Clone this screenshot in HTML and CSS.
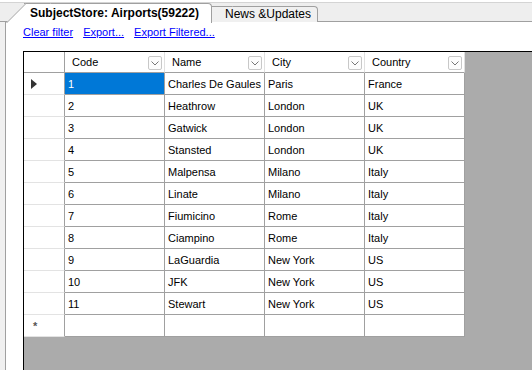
FILE: index.html
```html
<!DOCTYPE html>
<html lang="en">
<head>
    <meta charset="UTF-8">
    <title>SubjectStore: Airports</title>
    <link rel="stylesheet" href="styles.css">
</head>
<body>
    <div class="tabstrip">
        <div class="tab tab-active">SubjectStore: Airports(59222)</div>
        <div class="tab tab-idle">News &amp;Updates</div>
    </div>

    <div class="page">
        <div class="links">
            <a href="#">Clear filter</a>
            <a href="#">Export...</a>
            <a href="#">Export Filtered...</a>
        </div>

        <div class="grid">
            <div class="grid-table" id="gridTable">
                <div class="hcell corner"></div>
                <div class="hcell">Code<span class="drop"><svg width="8" height="5" viewBox="0 0 8 5"><polyline points="0.5,0.5 4,4 7.5,0.5" fill="none" stroke="#777" stroke-width="1"/></svg></span></div>
                <div class="hcell">Name<span class="drop"><svg width="8" height="5" viewBox="0 0 8 5"><polyline points="0.5,0.5 4,4 7.5,0.5" fill="none" stroke="#777" stroke-width="1"/></svg></span></div>
                <div class="hcell">City<span class="drop"><svg width="8" height="5" viewBox="0 0 8 5"><polyline points="0.5,0.5 4,4 7.5,0.5" fill="none" stroke="#777" stroke-width="1"/></svg></span></div>
                <div class="hcell">Country<span class="drop"><svg width="8" height="5" viewBox="0 0 8 5"><polyline points="0.5,0.5 4,4 7.5,0.5" fill="none" stroke="#777" stroke-width="1"/></svg></span></div>
            </div>
        </div>
    </div>

    <script>
        // Airport rows
        const airports = [
            [1, "Charles De Gaules", "Paris", "France"],
            [2, "Heathrow", "London", "UK"],
            [3, "Gatwick", "London", "UK"],
            [4, "Stansted", "London", "UK"],
            [5, "Malpensa", "Milano", "Italy"],
            [6, "Linate", "Milano", "Italy"],
            [7, "Fiumicino", "Rome", "Italy"],
            [8, "Ciampino", "Rome", "Italy"],
            [9, "LaGuardia", "New York", "US"],
            [10, "JFK", "New York", "US"],
            [11, "Stewart", "New York", "US"]
        ];

        const gridTable = document.getElementById('gridTable');

        function addCell(text, cls) {
            const cell = document.createElement('div');
            cell.className = cls;
            cell.textContent = text;
            gridTable.appendChild(cell);
            return cell;
        }

        airports.forEach((row, i) => {
            const head = addCell('', 'rowhead');
            if (i === 0) head.innerHTML = '<span class="arrow"></span>';
            row.forEach((value, j) => {
                addCell(value, (i === 0 && j === 0) ? 'cell selected' : 'cell');
            });
        });

        // New row placeholder
        const newHead = addCell('', 'rowhead');
        newHead.innerHTML = '<span class="star">*</span>';
        for (let j = 0; j < 4; j++) addCell('', 'cell');
    </script>
</body>
</html>
```

FILE: styles.css
```css
* {
    box-sizing: border-box;
}

html, body {
    height: 100%;
}

body {
    display: flex;
    flex-direction: column;
    margin: 0;
    background-color: #f0f0f0;
    font-family: "Liberation Sans", Arial, sans-serif;
    font-size: 11px;
    color: #000;
    overflow: hidden;
}

.tabstrip {
    display: flex;
    flex: none;
    height: 22px;
    padding-left: 24px;
    border-top: 2px solid #fff;
    border-bottom: 1px solid #a0a0a0;
    background-color: #eeeeee;
    box-shadow: inset 0 1px 0 #d4d4d4;
}

.tab {
    position: relative;
    border-top: 1px solid #a0a0a0;
    border-right: 1px solid #a0a0a0;
    border-top-right-radius: 4px;
    font-size: 12px;
}

.tab::before {
    content: '';
    position: absolute;
    top: -1px;
    bottom: 0;
    border-left: 1px solid #a0a0a0;
    border-top: 1px solid #a0a0a0;
    background: inherit;
    transform: skewX(-45deg);
    transform-origin: bottom left;
    z-index: -1;
}

.tab-active {
    z-index: 2;
    margin-top: 1px;
    height: 20px;
    width: 188px;
    padding: 2px 0 0 6px;
    background-color: #fff;
    font-weight: bold;
}

.tab-active::before {
    left: -18px;
    width: 24px;
}

.tab-idle {
    z-index: 1;
    margin-top: 4px;
    height: 16px;
    width: 106px;
    padding: 0 0 0 13px;
    background-color: #f0f0f0;
}

.tab-idle::before {
    left: -18px;
    width: 22px;
}

.page {
    display: flex;
    flex-direction: column;
    flex: 1;
    min-height: 0;
    margin-left: 5px;
    border-left: 1px solid #a0a0a0;
    background-color: #fff;
}

.links {
    display: flex;
    flex: none;
    gap: 10px;
    height: 29px;
    padding: 3px 0 0 17px;
    font-size: 11px;
    line-height: 14px;
}

.links a {
    color: #0000ff;
}

.grid {
    flex: 1;
    margin-left: 17px;
    border-left: 1px solid #000;
    border-top: 1px solid #000;
    background-color: #ababab;
}

.grid-table {
    display: grid;
    grid-template-columns: 41px repeat(4, 100px);
    grid-template-rows: 21px;
    grid-auto-rows: 22px;
    width: 441px;
    background-color: #fff;
}

.hcell {
    display: flex;
    align-items: center;
    justify-content: space-between;
    padding: 0 2px 0 7px;
    border-right: 1px solid #e0e0e0;
    border-bottom: 1px solid #a0a0a0;
    font-size: 11px;
}

.hcell.corner {
    border-right: 1px solid #a0a0a0;
}

.drop {
    display: flex;
    align-items: center;
    justify-content: center;
    width: 14px;
    height: 14px;
    margin-top: 1px;
    border: 1px solid #c8c8c8;
    border-radius: 2px;
    background-color: #fcfcfc;
}

.drop svg {
    margin-top: 2px;
}

.rowhead {
    display: flex;
    align-items: center;
    padding-left: 7px;
    border-right: 1px solid #a0a0a0;
    border-bottom: 1px solid #e3e3e3;
}

.arrow {
    width: 0;
    height: 0;
    border-top: 5px solid transparent;
    border-bottom: 5px solid transparent;
    border-left: 6px solid #333;
}

.star {
    padding-left: 2px;
    font-size: 11px;
    font-weight: bold;
    color: #555;
}

.cell {
    display: flex;
    align-items: center;
    padding-left: 3px;
    border-right: 1px solid #a0a0a0;
    border-bottom: 1px solid #a0a0a0;
    font-size: 11px;
    white-space: nowrap;
    overflow: hidden;
}

.cell.selected {
    background-color: #0078d7;
    color: #fff;
}
```
